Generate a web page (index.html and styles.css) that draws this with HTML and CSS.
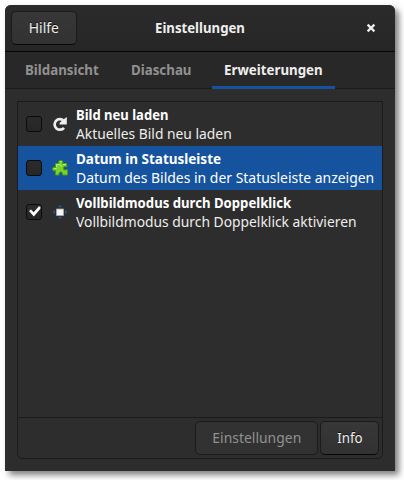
FILE: index.html
```
<!DOCTYPE html>
<html lang="de">
<head>
<meta charset="utf-8">
<title>Einstellungen</title>
<link rel="stylesheet" href="styles.css">
</head>
<body>
<div class="window">
  <header class="titlebar">
    <button class="button help"><span>Hilfe</span></button>
    <h1 class="title"><span>Einstellungen</span></h1>
    <svg class="close" width="10" height="10" viewBox="0 0 10 10"><path d="M1.6 1.6 8.4 8.4M8.4 1.6 1.6 8.4" stroke="#eeeeec" stroke-width="2.2"/></svg>
  </header>
  <nav class="tabs">
    <div class="tab t1"><span>Bildansicht</span></div>
    <div class="tab t2"><span>Diaschau</span></div>
    <div class="tab t3 active"><span>Erweiterungen</span></div>
  </nav>
  <main class="panel">
    <div class="list">
      <div class="row">
        <i class="check"></i>
        <svg class="icon" width="16" height="16" viewBox="0 0 16 16"><path d="M12 11.8A5.3 5.3 0 1 1 11.600 4.600" fill="none" stroke="#eeeeec" stroke-width="2.700"/><path d="M14.800 1v7.400H7.600V7l2.800-2.800z" fill="#eeeeec"/></svg>
        <div class="text"><b class="r1">Bild neu laden</b><span class="s1">Aktuelles Bild neu laden</span></div>
      </div>
      <div class="row selected">
        <i class="check"></i>
        <svg class="icon" width="16" height="16" viewBox="0 0 16 16"><path d="M3.500 3.500H7L6.500 2 7.500.6H10L11 2l-.5 1.500h4.300v3.300L13 6.500 11.500 7v2.500l1.500.5 2.500-.5v5.500h-5v-2L9.500 12H8l-1 1v2H3.500v-4.500L2 11 .6 10V8L2 7l1.500.5z" fill="#78d42a" stroke="#4b9b15"/><path d="M4.500 7V4.500h3.300M7.800 2l.5-.5h1M2 8.500h2.500M11 4.500h3M8 5l2 1" fill="none" stroke="#b8ed78"/></svg>
        <div class="text"><b class="r2">Datum in Statusleiste</b><span class="s2">Datum des Bildes in der Statusleiste anzeigen</span></div>
      </div>
      <div class="row">
        <i class="check"><svg width="16" height="16" viewBox="0 0 16 16"><path d="m3 7 2-1.500 2.700 2.700L12.700 2.500h1.700v2.300L7.800 12.500z" fill="#fff"/></svg></i>
        <svg class="icon" width="16" height="16" viewBox="0 0 16 16"><path d="M8 .8 10.300 3.300H5.700zM8 15.200 5.700 12.700h4.600zM.3 8l2.700-2.300v4.600zM15.700 8 13 5.700v4.600z" fill="#24508c"/><path d="M4.500 5h7v6.500h-7z" fill="#f4f4f2" stroke="#aaa" stroke-width=".8"/></svg>
        <div class="text"><b class="r3">Vollbildmodus durch Doppelklick</b><span class="s3">Vollbildmodus durch Doppelklick aktivieren</span></div>
      </div>
    </div>
    <footer class="actions">
      <button class="button settings" disabled><span>Einstellungen</span></button>
      <button class="button info"><span>Info</span></button>
    </footer>
  </main>
</div>
</body>
</html>
```
FILE: styles.css
```
* { box-sizing: border-box; }
body {
  margin: 0;
  padding: 5px 9px 9px 5px;
  height: 480px;
  overflow: hidden;
  background: #fff;
  color: #eeeeec;
  font: 14.67px/19px "Noto Sans", sans-serif;
}
.window {
  width: 390px;
  height: 466px;
  display: flex;
  flex-direction: column;
  background: #2d2d2d;
  border-radius: 6px 6px 0 0;
  box-shadow: 4px 4px 6px rgba(0, 0, 0, .5);
}
.titlebar {
  height: 47px;
  display: grid;
  grid-template-columns: 66px 1fr 66px;
  align-items: center;
  padding: 0 6px;
  background: linear-gradient(#2b2b2b, #262626);
  border-bottom: 1px solid #070707;
  border-radius: 6px 6px 0 0;
}
.title { margin: 0; font-size: inherit; text-align: center; white-space: nowrap; position: relative; top: -1px; }
.title span, .button span, .tab span { display: inline-block; }
.title span { transform: scaleX(.9); }
.close { justify-self: end; margin-right: 13px; }
.button {
  height: 34px;
  padding: 0 0 2px;
  border: 1px solid #1b1b1b;
  border-bottom-color: #070707;
  border-radius: 5px;
  background: linear-gradient(#373737, #323232);
  color: #eeeeec;
  font: inherit;
  text-align: center;
  white-space: nowrap;
  text-shadow: 0 -1px rgba(0, 0, 0, .7);
}
.button span { transform: scaleX(.95); }
.button:disabled { background: #323232; color: #919190; border-color: #1b1b1b; text-shadow: none; }
.tabs {
  height: 37px;
  display: flex;
  padding-left: 7px;
  background: #282828;
  border-bottom: 1px solid #1b1b1b;
}
.tab { height: 37px; padding: 8px 0 0 13px; font-weight: 700; color: #919190; white-space: nowrap; }
.tab span { transform: scaleX(.908); transform-origin: left; }
.t1 { width: 106px; }
.t2 { width: 94px; }
.t3 { width: 123px; padding-left: 12px; }
.active { color: #eeeeec; border-bottom: 3px solid #15539e; }
.panel {
  flex: 1;
  margin: 12px;
  display: flex;
  flex-direction: column;
  border: 1px solid #1b1b1b;
  border-radius: 0 0 5px 5px;
}
.list { flex: 1; }
.row { height: 44px; display: flex; align-items: center; padding-left: 8px; }
.selected { background: #15539e; color: #fff; }
.check {
  flex: none;
  width: 16px;
  height: 16px;
  border: 1px solid #0b0b0b;
  border-radius: 3px;
  background: linear-gradient(#2b2b2b, #262626);
}
.check svg { display: block; margin: -1px; overflow: visible; }
.icon { flex: none; margin: 0 8px 0 10px; }
.text { width: 298px; display: flex; flex-direction: column; align-items: flex-start; white-space: nowrap; }
.text b, .text span { transform-origin: left; }
.text b { color: #fff; }
.text span { transform: scaleX(.944); }
.text .s2 { transform: scaleX(.951); }
.r1 { transform: scaleX(.89); }
.r2 { transform: scaleX(.92); }
.r3 { transform: scaleX(.897); }
.actions {
  height: 41px;
  display: flex;
  justify-content: flex-end;
  gap: 2px;
  padding: 3px 3px 3px 2px;
  border-top: 1px solid #1b1b1b;
}
.settings { width: 123px; }
.info { width: 59px; }
.info span { transform: scaleX(.91); }
```
